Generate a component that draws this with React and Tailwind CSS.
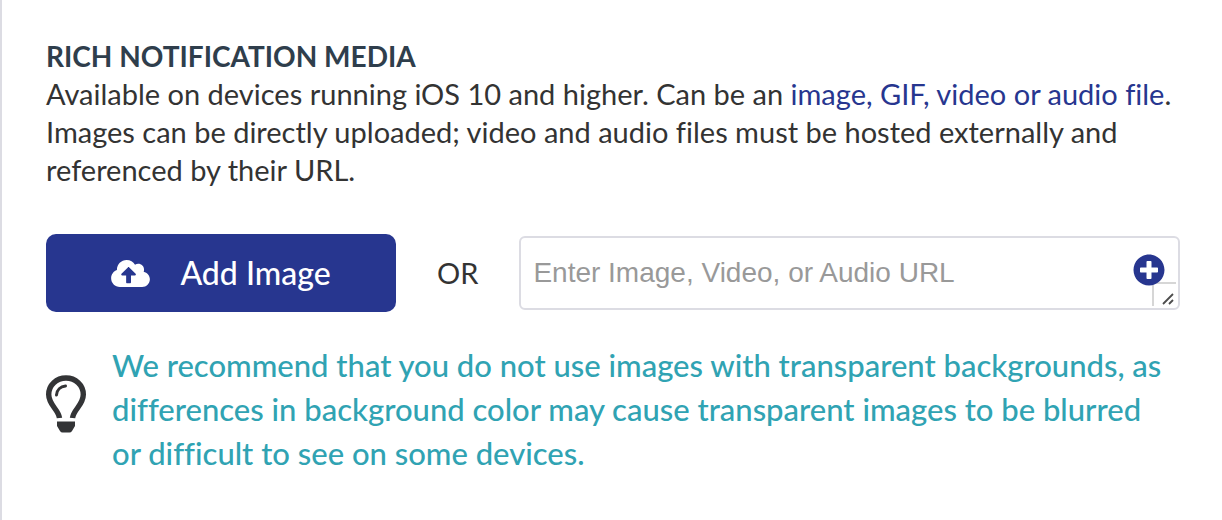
import { FaCloudUploadAlt, FaPlusCircle } from "react-icons/fa";

function BulbIcon() {
  return (
    <svg viewBox="0 0 40 58" className="mt-8 w-10 h-[58px] shrink-0" fill="none" aria-hidden="true">
      <path
        d="M13.500 43C12.500 34.500 2.700 30 2.700 19.500C2.700 10 10.500 3 20 3S37.300 10 37.300 19.500C37.300 30 27.500 34.500 26.500 43"
        stroke="#333436"
        strokeWidth="5.400"
      />
      <path d="M10.500 20C10.800 15 14.500 11.500 19.500 11" stroke="#333436" strokeWidth="3" strokeLinecap="round" />
      <path d="M11 46.500H29V51L26 56Q25 57.500 23.500 57.500H16.500Q15 57.500 14 56L11 51Z" fill="#333436" />
    </svg>
  );
}

// corner grip of the URL box
function ResizeGrip() {
  return (
    <svg
      viewBox="0 0 24 24"
      className="absolute right-1 bottom-1 w-6 h-6 pointer-events-none"
      fill="none"
      aria-hidden="true"
    >
      <path d="M1 24V1H24" stroke="#d6d6d6" strokeWidth="2" />
      <path d="M11 22L21 12M17 22L21 18" stroke="#4d4d4d" strokeWidth="1.800" />
    </svg>
  );
}

export default function App() {
  return (
    <main className="min-h-screen border-l-2 border-[#dcdce3] bg-white pt-[37px] pl-11 pr-[42px] font-['Lato',sans-serif] text-[29px] leading-[38px] text-[#333333] [font-variant-ligatures:none]">
      <h2 className="text-[28px] leading-[38px] font-bold text-[#2f3e4c]">RICH NOTIFICATION MEDIA</h2>
      <p>
        Available on devices running iOS 10 and higher. Can be an{" "}
        <a href="#media-types" className="text-[#27368f]">
          image, GIF, video or audio file
        </a>
        .
        <br />
        Images can be directly uploaded; video and audio files must be hosted externally and
        referenced by their URL.
      </p>

      <div className="mt-[45px] flex items-center">
        <button
          type="button"
          className="flex h-[78px] w-[350px] shrink-0 items-center justify-center gap-[30px] rounded-[10px] bg-[#27368f] text-[32px] font-medium text-white"
        >
          <FaCloudUploadAlt className="h-[31px] w-[39px]" />
          Add Image
        </button>
        <span className="mx-[41px] shrink-0">OR</span>
        <div className="relative grow">
          <textarea
            rows={1}
            aria-label="Media URL"
            placeholder="Enter Image, Video, or Audio URL"
            className="block h-[74px] w-full resize-none overflow-hidden rounded-md border-2 border-[#dcdce3] bg-white py-4 pr-16 pl-3 font-['Liberation_Sans',sans-serif] text-[28px] leading-[38px] placeholder:text-[#999999]"
          />
          <ResizeGrip />
          <button
            type="button"
            aria-label="Add personalization"
            className="absolute top-[18px] right-[15px] text-[#27368f]"
          >
            <FaPlusCircle className="size-8" />
          </button>
        </div>
      </div>

      <div className="mt-[31px] flex items-start gap-[26px]">
        <BulbIcon />
        <p className="text-[31px] leading-[44px] font-medium text-[#30a3b3]">
          We recommend that you do not use images with transparent backgrounds, as
          <br />
          differences in background color may cause transparent images to be blurred
          <br />
          or difficult to see on some devices.
        </p>
      </div>
    </main>
  );
}
